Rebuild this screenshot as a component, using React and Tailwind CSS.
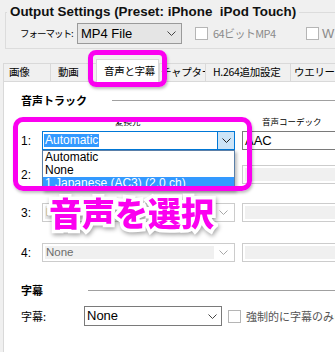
import React from "react";

const Chevron = ({ c = "#333" }) => (
  <svg width="9" height="5" viewBox="0 0 9 5" className="block shrink-0">
    <polyline points="0.5,0.5 4.5,4.5 8.5,0.5" fill="none" stroke={c} strokeWidth="1" />
  </svg>
);

const DisabledSelect = ({ text }) => (
  <div className="w-[193px] h-full border border-[#cccccc] bg-white flex items-center p-[2px] shrink-0">
    <div className="flex-1 h-full bg-[#f0f0f0] flex items-center pl-[1px] font-['Liberation_Sans',sans-serif] text-[11.5px] text-[#6d6d6d]">
      {text}
    </div>
    <div className="w-[18px] flex items-center justify-center shrink-0">
      <Chevron c="#a8a8a8" />
    </div>
  </div>
);

const DisabledField = () => (
  <div className="ml-[7px] w-[120px] h-full border border-[#cccccc] bg-white p-[2px] shrink-0">
    <div className="w-full h-full bg-[#f0f0f0]" />
  </div>
);

const Tab = ({ w, pl, children }) => (
  <div
    className="h-[18px] border-t border-l border-[#d9d9d9] bg-[#f0f0f0] flex items-center text-[10.5px] leading-none whitespace-nowrap overflow-hidden shrink-0 tracking-[-0.3px]"
    style={{ width: w, paddingLeft: pl }}
  >
    {children}
  </div>
);

const RowLabel = ({ children }) => (
  <span className="w-[21px] shrink-0 font-['Liberation_Sans',sans-serif] text-[12px]">{children}</span>
);

export default function App() {
  return (
    <div className="relative w-[335px] h-[352px] overflow-hidden bg-[#f0f0f0] flex flex-col font-['Noto_Sans_CJK_JP',sans-serif] text-black">
      {/* Output settings group */}
      <fieldset className="mt-[4px] ml-[5px] w-[345px] shrink-0 border border-[#dcdcdc] pt-[3px] pb-[4px] px-0 m-0">
        <legend className="ml-[1px] px-[3px] font-['Liberation_Sans',sans-serif] font-bold text-[13.4px] leading-[16px] whitespace-pre text-[#111]">
          {"Output Settings (Preset: iPhone  iPod Touch)"}
        </legend>
        <div className="flex items-center h-[21px] pl-[14px]">
          <span className="w-[57px] shrink-0 text-[9.5px] leading-none whitespace-nowrap tracking-[-1px]">フォーマット:</span>
          <div className="w-[105px] h-[21px] border border-[#9a9a9a] bg-[#e5e5e5] flex items-center pl-[3px] pr-[5px] shrink-0">
            <span className="flex-1 font-['Liberation_Sans',sans-serif] text-[13px]">MP4 File</span>
            <Chevron c="#444" />
          </div>
          <div className="ml-[13px] w-[13px] h-[13px] border border-[#b5b5b5] bg-white shrink-0" />
          <span className="ml-[5px] w-[93px] shrink-0 text-[11px] leading-none text-[#8a8a8a] whitespace-nowrap tracking-[-0.6px]">64ビットMP4</span>
          <div className="w-[13px] h-[13px] border border-[#b5b5b5] bg-white shrink-0" />
          <span className="ml-[3px] shrink-0 font-['Liberation_Sans',sans-serif] text-[13px] text-[#8a8a8a]">W</span>
        </div>
      </fieldset>

      {/* Tabs + panel */}
      <div className="ml-[3px] mt-[10px] flex-1 flex flex-col">
        <div className="flex items-end h-[23px] border-b border-[#d9d9d9]">
          <Tab w={47} pl={5}>画像</Tab>
          <Tab w={46} pl={7}>動画</Tab>
          <div className="relative -mb-px h-[23px] w-[63px] bg-white border-t border-l border-r border-[#d9d9d9] flex items-center pl-[7px] text-[10.5px] leading-none whitespace-nowrap shrink-0 tracking-[-0.3px]">
            音声と字幕
          </div>
          <Tab w={46} pl={1}>チャプター</Tab>
          <Tab w={85} pl={7}>H.264追加設定</Tab>
          <Tab w={60} pl={3}>ウエリーエ</Tab>
        </div>

        <div className="flex-1 bg-white border-l border-[#d9d9d9] pl-[17px] flex flex-col">
          {/* 音声トラック heading */}
          <div className="mt-[12px] h-[12px] flex items-center">
            <span className="w-[91px] shrink-0 text-[11px] font-bold leading-none">音声トラック</span>
            <div className="flex-1 h-px bg-[#a0a0a0]" />
          </div>

          {/* column labels */}
          <div className="mt-[10px] h-[10px] flex items-center text-[8.5px] leading-none whitespace-nowrap">
            <span className="ml-[94px] w-[147px] shrink-0">変換元</span>
            <span className="shrink-0">音声コーデック</span>
          </div>

          {/* row 1 */}
          <div className="mt-[5px] h-[19px] flex items-center">
            <RowLabel>1:</RowLabel>
            <div className="relative w-[193px] h-full border border-[#0078d7] bg-white flex items-center shrink-0">
              <div className="flex-1 pl-[1px] flex items-center">
                <span className="bg-[#3399ff] text-white px-[1px] font-['Liberation_Sans',sans-serif] text-[12px] leading-[13px]">
                  Automatic
                </span>
              </div>
              <div className="w-[17px] h-full bg-[#cce4f7] border-l border-[#0078d7] flex items-center justify-center shrink-0">
                <Chevron c="#222" />
              </div>
              <div className="absolute left-[-1px] top-[18px] w-[193px] bg-white border border-[#5a7fa8] z-10 shadow-[2px_2px_3px_rgba(0,0,0,0.25)] font-['Liberation_Sans',sans-serif] text-[12px] whitespace-nowrap">
                <div className="h-[13px] leading-[13px] pl-[2px]">Automatic</div>
                <div className="h-[13px] leading-[13px] pl-[2px]">None</div>
                <div className="h-[13px] leading-[13px] pl-[2px] bg-[#3399ff] text-white">1 Japanese (AC3) (2.0 ch)</div>
              </div>
            </div>
            <div className="ml-[7px] w-[120px] h-full border border-[#7a7a7a] bg-white flex items-center pl-[2px] font-['Liberation_Sans',sans-serif] text-[13px] shrink-0">
              AAC
            </div>
          </div>

          {/* row 2 */}
          <div className="mt-[15px] h-[19px] flex items-center">
            <RowLabel>2:</RowLabel>
            <DisabledSelect text="None" />
            <DisabledField />
          </div>

          {/* row 3 */}
          <div className="mt-[19px] h-[19px] flex items-center">
            <RowLabel>3:</RowLabel>
            <DisabledSelect text="None" />
            <DisabledField />
          </div>

          {/* row 4 */}
          <div className="mt-[21px] h-[19px] flex items-center">
            <RowLabel>4:</RowLabel>
            <DisabledSelect text="None" />
            <DisabledField />
          </div>

          {/* 字幕 heading */}
          <div className="mt-[22px] h-[12px] flex items-center">
            <span className="w-[67px] shrink-0 text-[11px] font-bold leading-none">字幕</span>
            <div className="flex-1 h-px bg-[#a0a0a0]" />
          </div>

          {/* 字幕 row */}
          <div className="mt-[10px] h-[20px] flex items-center">
            <span className="w-[63px] shrink-0 text-[11px] leading-none">字幕:</span>
            <div className="w-[138px] h-full border border-[#7a7a7a] bg-white flex items-center pl-[2px] pr-[4px] shrink-0">
              <span className="flex-1 font-['Liberation_Sans',sans-serif] text-[13px]">None</span>
              <Chevron c="#444" />
            </div>
            <div className="ml-[6px] w-[13px] h-[13px] border border-[#b5b5b5] bg-white shrink-0" />
            <span className="ml-[5px] shrink-0 text-[11px] leading-none text-[#555] whitespace-nowrap">強制的に字幕のみにする</span>
          </div>
        </div>
      </div>

      {/* Annotation overlays */}
      <div className="absolute left-[88px] top-[50px] w-[79px] h-[37px] border-[5px] border-[#fb00f0] rounded-[8px] z-20 shadow-[1px_2px_3px_rgba(0,0,0,0.25)]" />
      <div className="absolute left-[13px] top-[117px] w-[239px] h-[74px] border-[5px] border-[#fb00f0] rounded-[10px] z-20 shadow-[1px_2px_3px_rgba(0,0,0,0.25)]" />
      <div className="absolute left-[49px] top-[196px] z-30 text-[33px] leading-none font-black text-[#fb00f0] whitespace-nowrap [-webkit-text-stroke:7px_white] [paint-order:stroke_fill] [filter:drop-shadow(1px_2px_2px_rgba(0,0,0,0.35))]">
        音声を選択
      </div>
    </div>
  );
}
